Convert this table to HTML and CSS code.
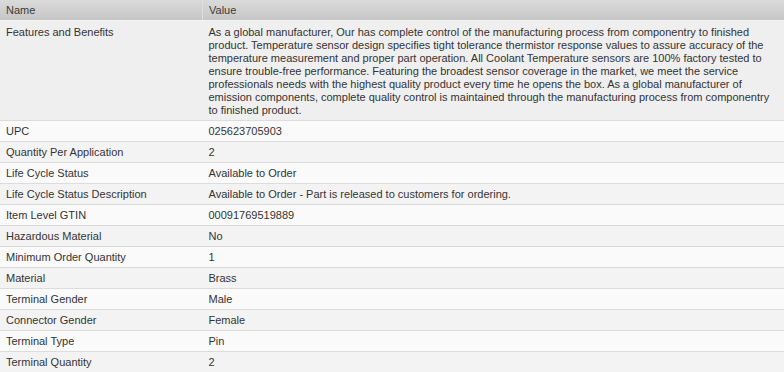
FILE: index.html
```html
<!DOCTYPE html>
<html>
<head>
<meta charset="utf-8">
<link rel="stylesheet" href="styles.css">
</head>
<body>
<table class="spec">
  <thead>
    <tr><th class="c-name">Name</th><th class="c-val">Value</th></tr>
  </thead>
  <tbody>
    <tr class="alt big"><td>Features and Benefits</td><td>As a global manufacturer, Our has complete control of the manufacturing process from componentry to finished product. Temperature sensor design specifies tight tolerance thermistor response values to assure accuracy of the temperature measurement and proper part operation. All Coolant Temperature sensors are 100% factory tested to ensure trouble-free performance. Featuring the broadest sensor coverage in the market, we meet the service professionals needs with the highest quality product every time he opens the box. As a global manufacturer of emission components, complete quality control is maintained through the manufacturing process from componentry to finished product.</td></tr>
    <tr><td>UPC</td><td>025623705903</td></tr>
    <tr class="alt"><td>Quantity Per Application</td><td>2</td></tr>
    <tr><td>Life Cycle Status</td><td>Available to Order</td></tr>
    <tr class="alt"><td>Life Cycle Status Description</td><td>Available to Order - Part is released to customers for ordering.</td></tr>
    <tr><td>Item Level GTIN</td><td>00091769519889</td></tr>
    <tr class="alt"><td>Hazardous Material</td><td>No</td></tr>
    <tr><td>Minimum Order Quantity</td><td>1</td></tr>
    <tr class="alt"><td>Material</td><td>Brass</td></tr>
    <tr><td>Terminal Gender</td><td>Male</td></tr>
    <tr class="alt"><td>Connector Gender</td><td>Female</td></tr>
    <tr><td>Terminal Type</td><td>Pin</td></tr>
    <tr class="alt"><td>Terminal Quantity</td><td>2</td></tr>
  </tbody>
</table>
</body>
</html>
```
FILE: styles.css
```css
html, body {
  margin: 0;
  padding: 0;
  background: #ffffff;
}
.spec {
  width: 784px;
  border-collapse: collapse;
  font-family: "Liberation Sans", Arial, sans-serif;
  font-size: 11px;
  color: #333333;
  table-layout: fixed;
}
.spec th {
  height: 20px;
  padding: 0 6px;
  text-align: left;
  font-weight: normal;
  color: #3a3a3a;
  background: linear-gradient(#dadada, #c6c6c6);
  border-bottom: 1px solid #f4f4f4;
}
.spec .c-name {
  width: 190px;
  border-right: 1px solid #dedede;
}
.spec td {
  height: 20px;
  padding: 0 6px;
  vertical-align: middle;
  border-bottom: 1px solid #dcdcdc;
  background: #fafafa;
  line-height: 13px;
}
.spec tr.alt td {
  background: #f3f3f3;
}
.spec tr.big td {
  vertical-align: top;
  padding-top: 5px;
  padding-bottom: 3px;
  background: #efefef;
}
```
